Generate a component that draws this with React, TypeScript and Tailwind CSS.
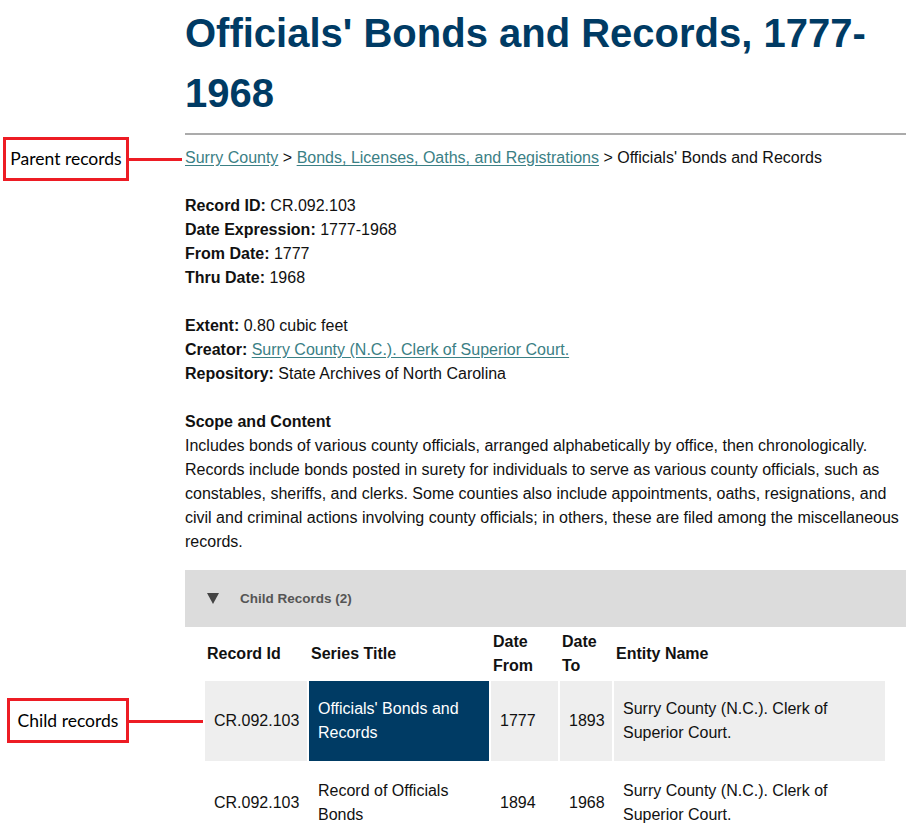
export default function App() {
  const link = "text-[#3b8085] underline underline-offset-2";
  return (
    <div className="relative min-h-screen bg-white font-['Liberation_Sans',Arial,sans-serif] text-[16px] leading-6 text-[#111]">
      {/* Annotation callouts */}
      <div className="absolute left-[3px] top-[137px] flex h-[44px] w-[126px] items-center justify-center border-[3px] border-[#ed1c24] font-['Lato',sans-serif] text-[17.5px] text-black">
        Parent records
      </div>
      <div className="absolute left-[129px] top-[158px] h-[3px] w-[53px] bg-[#ed1c24]" />
      <div className="absolute left-[7px] top-[698px] flex h-[45px] w-[122px] items-center justify-center border-[3px] border-[#ed1c24] font-['Lato',sans-serif] text-[17.5px] text-black">
        Child records
      </div>
      <div className="absolute left-[129px] top-[720px] h-[3px] w-[74px] bg-[#ed1c24]" />

      <main className="ml-[185px] w-[721px] pt-[3px]">
        <h1 className="text-[40px] font-bold leading-[60px] text-[#003b64]">
          Officials' Bonds and Records, 1777-<wbr />1968
        </h1>
        <hr className="mt-[10px] border-t-2 border-[#ababab]" />

        {/* Breadcrumb */}
        <p className="mt-[11px]">
          <a href="#" className={link}>Surry County</a> &gt;{" "}
          <a href="#" className={link}>Bonds, Licenses, Oaths, and Registrations</a> &gt;{" "}
          Officials' Bonds and Records
        </p>

        <div className="mt-6">
          <div><b>Record ID:</b> CR.092.103</div>
          <div><b>Date Expression:</b> 1777-1968</div>
          <div><b>From Date:</b> 1777</div>
          <div><b>Thru Date:</b> 1968</div>
        </div>

        <div className="mt-6">
          <div><b>Extent:</b> 0.80 cubic feet</div>
          <div>
            <b>Creator:</b>{" "}
            <a href="#" className={link}>Surry County (N.C.). Clerk of Superior Court.</a>
          </div>
          <div><b>Repository:</b> State Archives of North Carolina</div>
        </div>

        <div className="mt-6">
          <h2 className="font-bold">Scope and Content</h2>
          <p>
            Includes bonds of various county officials, arranged alphabetically by office, then chronologically.
            Records include bonds posted in surety for individuals to serve as various county officials, such as
            constables, sheriffs, and clerks. Some counties also include appointments, oaths, resignations, and
            civil and criminal actions involving county officials; in others, these are filed among the
            miscellaneous records.
          </p>
        </div>

        {/* Child records panel */}
        <div className="mt-4 flex h-[57px] items-center bg-[#dcdcdc] pl-[22px]">
          <svg className="h-[11px] w-3 text-[#444]" viewBox="0 0 12 11" fill="currentColor">
            <polygon points="0,0 12,0 6,11" />
          </svg>
          <span className="ml-[21px] text-[13.5px] font-bold text-[#555]">Child Records (2)</span>
        </div>

        <table className="ml-[18px] w-[684px] table-fixed border-separate border-spacing-[2px]">
          <colgroup>
            <col className="w-[102px]" />
            <col className="w-[180px]" />
            <col className="w-[67px]" />
            <col className="w-[52px]" />
            <col className="w-[271px]" />
          </colgroup>
          <thead>
            <tr>
              <th className="px-[2px] py-px text-left align-middle font-bold">Record Id</th>
              <th className="px-[2px] py-px text-left align-middle font-bold">Series Title</th>
              <th className="px-[2px] py-px text-left align-middle font-bold">Date From</th>
              <th className="px-[2px] py-px text-left align-middle font-bold">Date To</th>
              <th className="px-[2px] py-px text-left align-middle font-bold">Entity Name</th>
            </tr>
          </thead>
          <tbody>
            <tr>
              <td className="bg-[#eeeeee] px-[9px] py-4">CR.092.103</td>
              <td className="bg-[#003b64] px-[9px] py-4 text-white">Officials' Bonds and Records</td>
              <td className="bg-[#eeeeee] px-[9px] py-4">1777</td>
              <td className="bg-[#eeeeee] px-[9px] py-4">1893</td>
              <td className="bg-[#eeeeee] px-[9px] py-4">Surry County (N.C.). Clerk of Superior Court.</td>
            </tr>
            <tr>
              <td className="px-[9px] py-4">CR.092.103</td>
              <td className="px-[9px] py-4">Record of Officials Bonds</td>
              <td className="px-[9px] py-4">1894</td>
              <td className="px-[9px] py-4">1968</td>
              <td className="px-[9px] py-4">Surry County (N.C.). Clerk of Superior Court.</td>
            </tr>
          </tbody>
        </table>
      </main>
    </div>
  );
}
